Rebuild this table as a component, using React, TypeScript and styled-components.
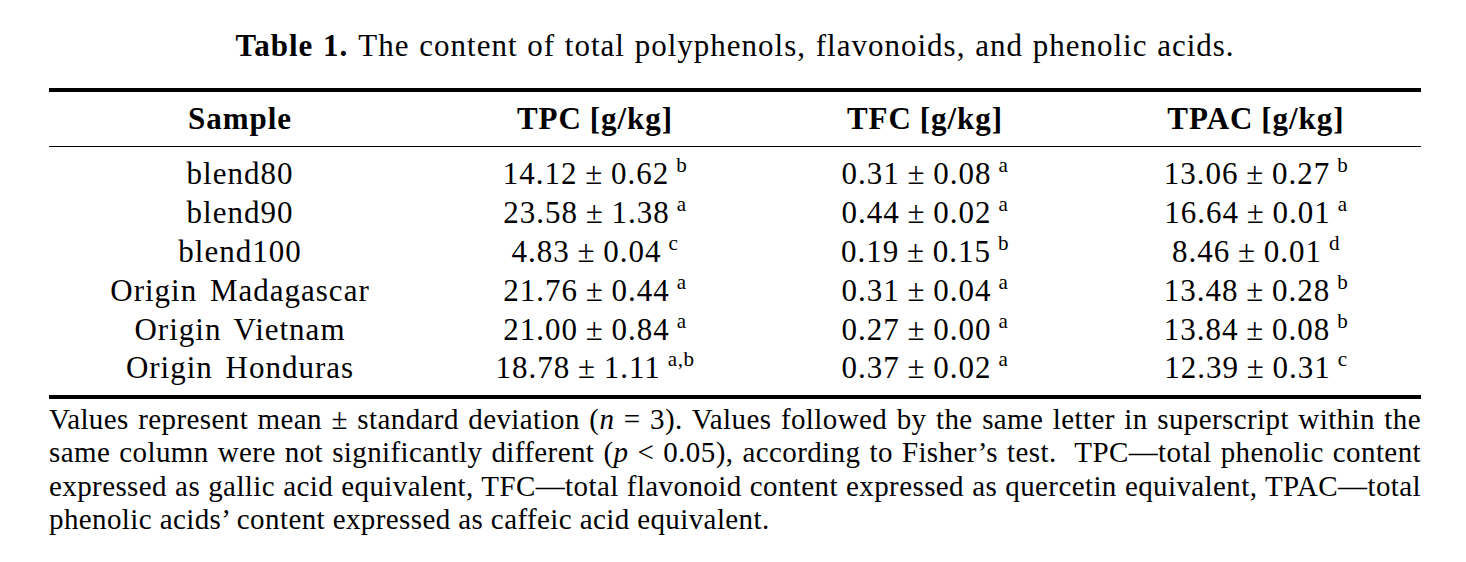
import React from "react";
import styled, { createGlobalStyle } from "styled-components";

const Global = createGlobalStyle`
  html, body { margin: 0; padding: 0; background: #fff; }
  body { font-family: "Liberation Serif", "Times New Roman", serif; color: #000; }
`;

const Page = styled.div`
  width: 1466px;
  height: 562px;
  box-sizing: border-box;
  padding: 0 45px 0 49px;
  display: flex;
  flex-direction: column;
`;

const Caption = styled.div`
  font-size: 31px;
  letter-spacing: 1px;
  word-spacing: 1px;
  line-height: 34px;
  text-align: center;
  margin-top: 29px;
  height: 59px;
  white-space: nowrap;
`;

const CapLabel = styled.b`
  margin-right: 10px;
`;

const Table = styled.table`
  width: 1372px;
  border-collapse: collapse;
  border-top: 4px solid #000;
  border-bottom: 4px solid #000;
  font-size: 31px;
  letter-spacing: 1px;
  table-layout: fixed;
`;

const Th = styled.th<{ $w: number }>`
  width: ${(p) => p.$w}px;
  height: 54px;
  padding: 0;
  font-weight: bold;
  text-align: center;
  vertical-align: middle;
  border-bottom: 1px solid #000;
  word-spacing: -1px;
`;

const Td = styled.td<{ $pad?: "top" | "bottom"; $name?: boolean }>`
  padding: 0;
  height: ${(p) => (p.$pad === "top" ? 46.5 : p.$pad === "bottom" ? 48 : 39)}px;
  padding-top: ${(p) => (p.$pad === "top" ? 7.5 : 0)}px;
  padding-bottom: ${(p) => (p.$pad === "bottom" ? 9 : 0)}px;
  text-align: center;
  vertical-align: middle;
  white-space: nowrap;
  box-sizing: border-box;
  word-spacing: ${(p) => (p.$name ? 4 : -1)}px;
`;

const Sup = styled.sup`
  font-size: 0.68em;
  vertical-align: 0.55em;
  line-height: 0;
  margin-left: 7px;
  letter-spacing: 0.5px;
`;

const Notes = styled.div`
  margin-top: 4px;
  font-size: 29px;
  letter-spacing: 0.4px;
  line-height: 33.3px;
`;

const NoteLine = styled.span<{ $last?: boolean }>`
  display: block;
  text-align: justify;
  text-align-last: ${(p) => (p.$last ? "left" : "justify")};
  white-space: nowrap;
`;

const rows: [string, string, string, string, string, string, string][] = [
  ["blend80", "14.12 ± 0.62", "b", "0.31 ± 0.08", "a", "13.06 ± 0.27", "b"],
  ["blend90", "23.58 ± 1.38", "a", "0.44 ± 0.02", "a", "16.64 ± 0.01", "a"],
  ["blend100", "4.83 ± 0.04", "c", "0.19 ± 0.15", "b", "8.46 ± 0.01", "d"],
  ["Origin Madagascar", "21.76 ± 0.44", "a", "0.31 ± 0.04", "a", "13.48 ± 0.28", "b"],
  ["Origin Vietnam", "21.00 ± 0.84", "a", "0.27 ± 0.00", "a", "13.84 ± 0.08", "b"],
  ["Origin Honduras", "18.78 ± 1.11", "a,b", "0.37 ± 0.02", "a", "12.39 ± 0.31", "c"],
];

export default function App() {
  return (
    <>
      <Global />
      <Page>
        <Caption>
          <CapLabel>Table 1.</CapLabel>The content of total polyphenols, flavonoids, and phenolic acids.
        </Caption>
        <Table>
          <thead>
            <tr>
              <Th $w={382}>Sample</Th>
              <Th $w={328}>TPC [g/kg]</Th>
              <Th $w={332}>TFC [g/kg]</Th>
              <Th $w={330}>TPAC [g/kg]</Th>
            </tr>
          </thead>
          <tbody>
            {rows.map((r, i) => {
              const pad = i === 0 ? "top" : i === rows.length - 1 ? "bottom" : undefined;
              return (
                <tr key={r[0]}>
                  <Td $pad={pad} $name>
                    {r[0]}
                  </Td>
                  <Td $pad={pad}>
                    {r[1]}
                    <Sup>{r[2]}</Sup>
                  </Td>
                  <Td $pad={pad}>
                    {r[3]}
                    <Sup>{r[4]}</Sup>
                  </Td>
                  <Td $pad={pad}>
                    {r[5]}
                    <Sup>{r[6]}</Sup>
                  </Td>
                </tr>
              );
            })}
          </tbody>
        </Table>
        <Notes>
          <NoteLine>
            Values represent mean ± standard deviation (<i>n</i> = 3). Values followed by the same letter in superscript within the
          </NoteLine>
          <NoteLine>
            same column were not significantly different (<i>p</i> &lt; 0.05), according to Fisher’s test.&nbsp; TPC—total phenolic content
          </NoteLine>
          <NoteLine>
            expressed as gallic acid equivalent, TFC—total flavonoid content expressed as quercetin equivalent, TPAC—total
          </NoteLine>
          <NoteLine $last>phenolic acids’ content expressed as caffeic acid equivalent.</NoteLine>
        </Notes>
      </Page>
    </>
  );
}
